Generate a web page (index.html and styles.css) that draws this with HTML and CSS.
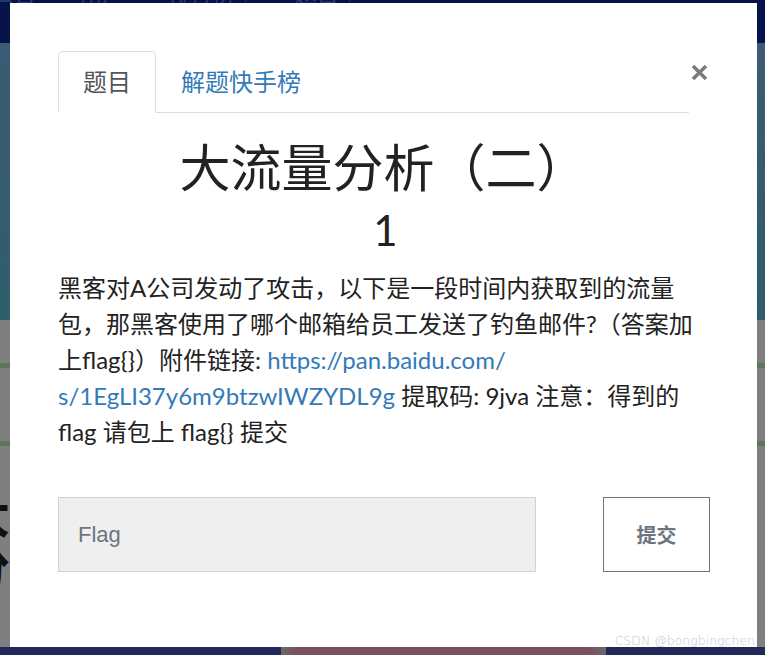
FILE: index.html
```html
<!DOCTYPE html>
<html lang="zh">
<head>
<meta charset="utf-8">
<link rel="stylesheet" href="styles.css">
</head>
<body>
<div class="page">
  <div class="topbar">
    <span>公告</span><span>用户</span><span>排行榜 ▾</span><span>题目 ▾</span>
  </div>
  <div class="teal"></div>
  <div class="grey">
    <div class="gline g1"></div>
    <div class="gline g2"></div>
    <div class="bigtext">大<br>分</div>
  </div>
  <div class="bottombar"><div class="mauve"></div></div>

  <div class="modal">
    <button class="close" aria-label="close">
      <svg width="17" height="17" viewBox="0 0 17 17"><path d="M2 2L15 15M15 2L2 15" stroke="#7b7b7b" stroke-width="3.5" stroke-linecap="butt"/></svg>
    </button>
    <div class="body">
      <ul class="tabs">
        <li class="tab active">题目</li>
        <li class="tab"><a href="#">解题快手榜</a></li>
      </ul>
      <h2 class="title">大流量分析（二）</h2>
      <h3 class="score">1</h3>
      <p class="desc">黑客对A公司发动了攻击，以下是一段时间内获取到的流量<br>包，那黑客使用了哪个邮箱给员工发送了钓鱼邮件?（答案加<br>上flag{}）附件链接: <a href="#">https://pan.baidu.com/<br>s/1EgLI37y6m9btzwIWZYDL9g</a> 提取码: 9jva 注意：得到的<br>flag 请包上 flag{} 提交</p>
      <form class="submit-row">
        <input class="flag-input" type="text" placeholder="Flag">
        <button class="submit-btn" type="button">提交</button>
      </form>
    </div>
  </div>
  <div class="watermark">CSDN @bongbingchen</div>
</div>
</body>
</html>
```

FILE: styles.css
```css
html, body {
  margin: 0;
  padding: 0;
}
body {
  width: 765px;
  height: 655px;
  overflow: hidden;
  font-family: Lato, "Noto Sans CJK SC", sans-serif;
}
.page {
  position: relative;
  width: 765px;
  height: 655px;
  display: flex;
  flex-direction: column;
  background: #7f7f7f;
}
.topbar {
  height: 43px;
  background: #06134a;
  display: flex;
  gap: 44px;
  color: #2c3b72;
  font-size: 22px;
  line-height: 22px;
  overflow: hidden;
}
.topbar span {
  margin-top: -17px;
}
.topbar span:first-child { margin-left: -8px; }
.teal {
  height: 277px;
  background: linear-gradient(#3c5a74, #2f5e6a);
}
.grey {
  flex: 1;
  background: #7f7f7f;
  overflow: hidden;
}
.gline {
  height: 5px;
  background: #5b765b;
}
.g1 { margin-top: 43px; }
.g2 { margin-top: 73px; }
.bigtext {
  margin-top: 40px;
  margin-left: -38px;
  font-family: "Noto Sans CJK SC", sans-serif;
  font-size: 48px;
  font-weight: 700;
  line-height: 52px;
  color: #111;
}
.bottombar {
  height: 8px;
  background: #1f2858;
  display: flex;
}
.mauve {
  margin-left: 281px;
  width: 325px;
  background: linear-gradient(90deg, #6a6a6a 0, #7a5060 15px, #7a5060 310px, #6a6a6a 325px);
}
.modal {
  position: absolute;
  left: 10px;
  top: 3px;
  width: 747px;
  height: 644px;
  background: #fff;
  box-sizing: border-box;
  padding: 48px 68px 0 48px;
}
.close {
  position: absolute;
  top: 59px;
  right: 47px;
  width: 21px;
  height: 21px;
  padding: 2px;
  border: 0;
  background: none;
  display: flex;
  align-items: center;
  justify-content: center;
}
.body {
  width: 631px;
}
.tabs {
  list-style: none;
  margin: 0;
  padding: 0;
  display: flex;
  border-bottom: 1px solid #dddddd;
}
.tab {
  font-size: 24px;
  line-height: 36px;
  padding: 12px 24px;
  margin-bottom: -1px;
  border: 1px solid transparent;
  border-radius: 5px 5px 0 0;
  color: #555;
}
.tab.active {
  border-color: #ddd #ddd transparent #ddd;
  background: #fff;
}
.tab a {
  color: #337ab7;
  text-decoration: none;
}
.title {
  margin: 28px 0 0;
  padding-left: 20px;
  text-align: center;
  font-size: 51px;
  font-weight: 400;
  line-height: 54px;
  color: #222;
}
.score {
  margin: 12px 0 0;
  padding-left: 24px;
  text-align: center;
  font-size: 42px;
  font-weight: 400;
  line-height: 46px;
  color: #222;
}
.desc {
  margin: 17px 0 0;
  font-size: 24px;
  line-height: 36px;
  color: #222;
  white-space: nowrap;
}
.desc a {
  color: #337ab7;
  text-decoration: none;
}
.submit-row {
  margin: 47px 0 0;
  display: flex;
  gap: 67px;
  width: 652px;
}
.flag-input {
  width: 478px;
  height: 75px;
  box-sizing: border-box;
  background: #efefef;
  border: 1px solid #cfd3d6;
  padding: 0 19px;
  font-family: "Liberation Sans", Arial, sans-serif;
  font-size: 22px;
  color: #495057;
  outline: none;
}
.flag-input::placeholder {
  color: #6c757d;
}
.submit-btn {
  width: 107px;
  height: 75px;
  box-sizing: border-box;
  background: #fff;
  border: 1px solid #6c757d;
  color: #6c757d;
  font-family: "Noto Sans CJK SC", sans-serif;
  font-size: 20px;
  font-weight: 700;
}
.watermark {
  position: absolute;
  right: 10px;
  bottom: 7px;
  font-family: "DejaVu Sans", sans-serif;
  font-size: 12.5px;
  font-weight: 200;
  color: #c8c8c8;
}
```
